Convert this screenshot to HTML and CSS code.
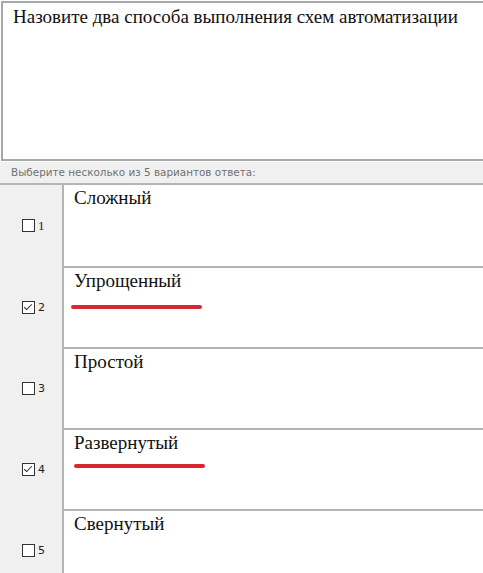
FILE: index.html
```html
<!DOCTYPE html>
<html lang="ru">
<head>
<meta charset="utf-8">
<title>Вопрос</title>
<link rel="stylesheet" href="styles.css">
</head>
<body>
<div class="test">
  <div class="question">Назовите два способа выполнения схем автоматизации</div>
  <div class="hint">Выберите несколько из 5 вариантов ответа:</div>
  <div class="answers">
    <div class="answer">
      <div class="mark"><span class="box"></span><span class="num serif">1</span></div>
      <div class="option">Сложный</div>
    </div>
    <div class="answer">
      <div class="mark"><span class="box checked"></span><span class="num">2</span></div>
      <div class="option">Упрощенный<span class="underline first"></span></div>
    </div>
    <div class="answer">
      <div class="mark"><span class="box"></span><span class="num">3</span></div>
      <div class="option">Простой</div>
    </div>
    <div class="answer">
      <div class="mark"><span class="box checked"></span><span class="num">4</span></div>
      <div class="option">Развернутый<span class="underline second"></span></div>
    </div>
    <div class="answer">
      <div class="mark"><span class="box"></span><span class="num">5</span></div>
      <div class="option">Свернутый</div>
    </div>
  </div>
</div>
</body>
</html>
```
FILE: styles.css
```css
html, body {
  margin: 0;
  padding: 0;
  background: #ffffff;
  overflow: hidden;
}

.test {
  width: 490px;
  padding-top: 1px;
}

.question {
  border-top: 2px solid #a8a8a8;
  border-left: 2px solid #a8a8a8;
  border-bottom: 2px solid #a8a8a8;
  margin-left: 1px;
  padding: 3px 0 0 10px;
  box-sizing: border-box;
  height: 160px;
  font-family: "Liberation Serif", "Times New Roman", serif;
  font-size: 19px;
  color: #111111;
}

.hint {
  height: 21px;
  background: #f0f0f0;
  border-top: 1px solid #ffffff;
  border-bottom: 2px solid #b4b4b4;
  padding-left: 11px;
  font-family: "DejaVu Sans", Tahoma, sans-serif;
  font-size: 10.4px;
  line-height: 21px;
  color: #707070;
}

.answers {
  display: flex;
  flex-direction: column;
}

.answer {
  display: grid;
  grid-template-columns: 62px 1fr;
  height: 81px;
}

.answer + .answer .option {
  border-top: 2px solid #b4b4b4;
}

.answer + .answer .mark {
  border-top: 2px solid #f0f0f0;
}

.mark {
  background: #f0f0f0;
  display: flex;
  align-items: center;
  justify-content: flex-start;
  padding-left: 22px;
  gap: 3px;
}

.box {
  width: 13px;
  height: 13px;
  border: 1px solid #333333;
  box-sizing: border-box;
  background: #ffffff;
  position: relative;
}

/* tick inside a checked box */
.box.checked::after {
  content: "";
  position: absolute;
  left: 1px;
  top: 2px;
  width: 7px;
  height: 3px;
  border-left: 1.5px solid #333333;
  border-bottom: 1.5px solid #333333;
  transform: rotate(-45deg);
  transform-origin: center;
}

.num {
  font-family: "DejaVu Sans", Tahoma, sans-serif;
  font-size: 11px;
  color: #222222;
}

.num.serif {
  font-family: "Liberation Serif", serif;
  font-size: 13px;
}

.option {
  border-left: 2px solid #b4b4b4;
  padding: 2px 0 0 10px;
  font-family: "Liberation Serif", "Times New Roman", serif;
  font-size: 19px;
  color: #111111;
  position: relative;
}

.underline {
  position: absolute;
  width: 131px;
  height: 4px;
  border-radius: 2px;
  background: #d92730;
}

.underline.first {
  left: 7px;
  top: 37px;
}

.underline.second {
  left: 10px;
  top: 34px;
}
```
